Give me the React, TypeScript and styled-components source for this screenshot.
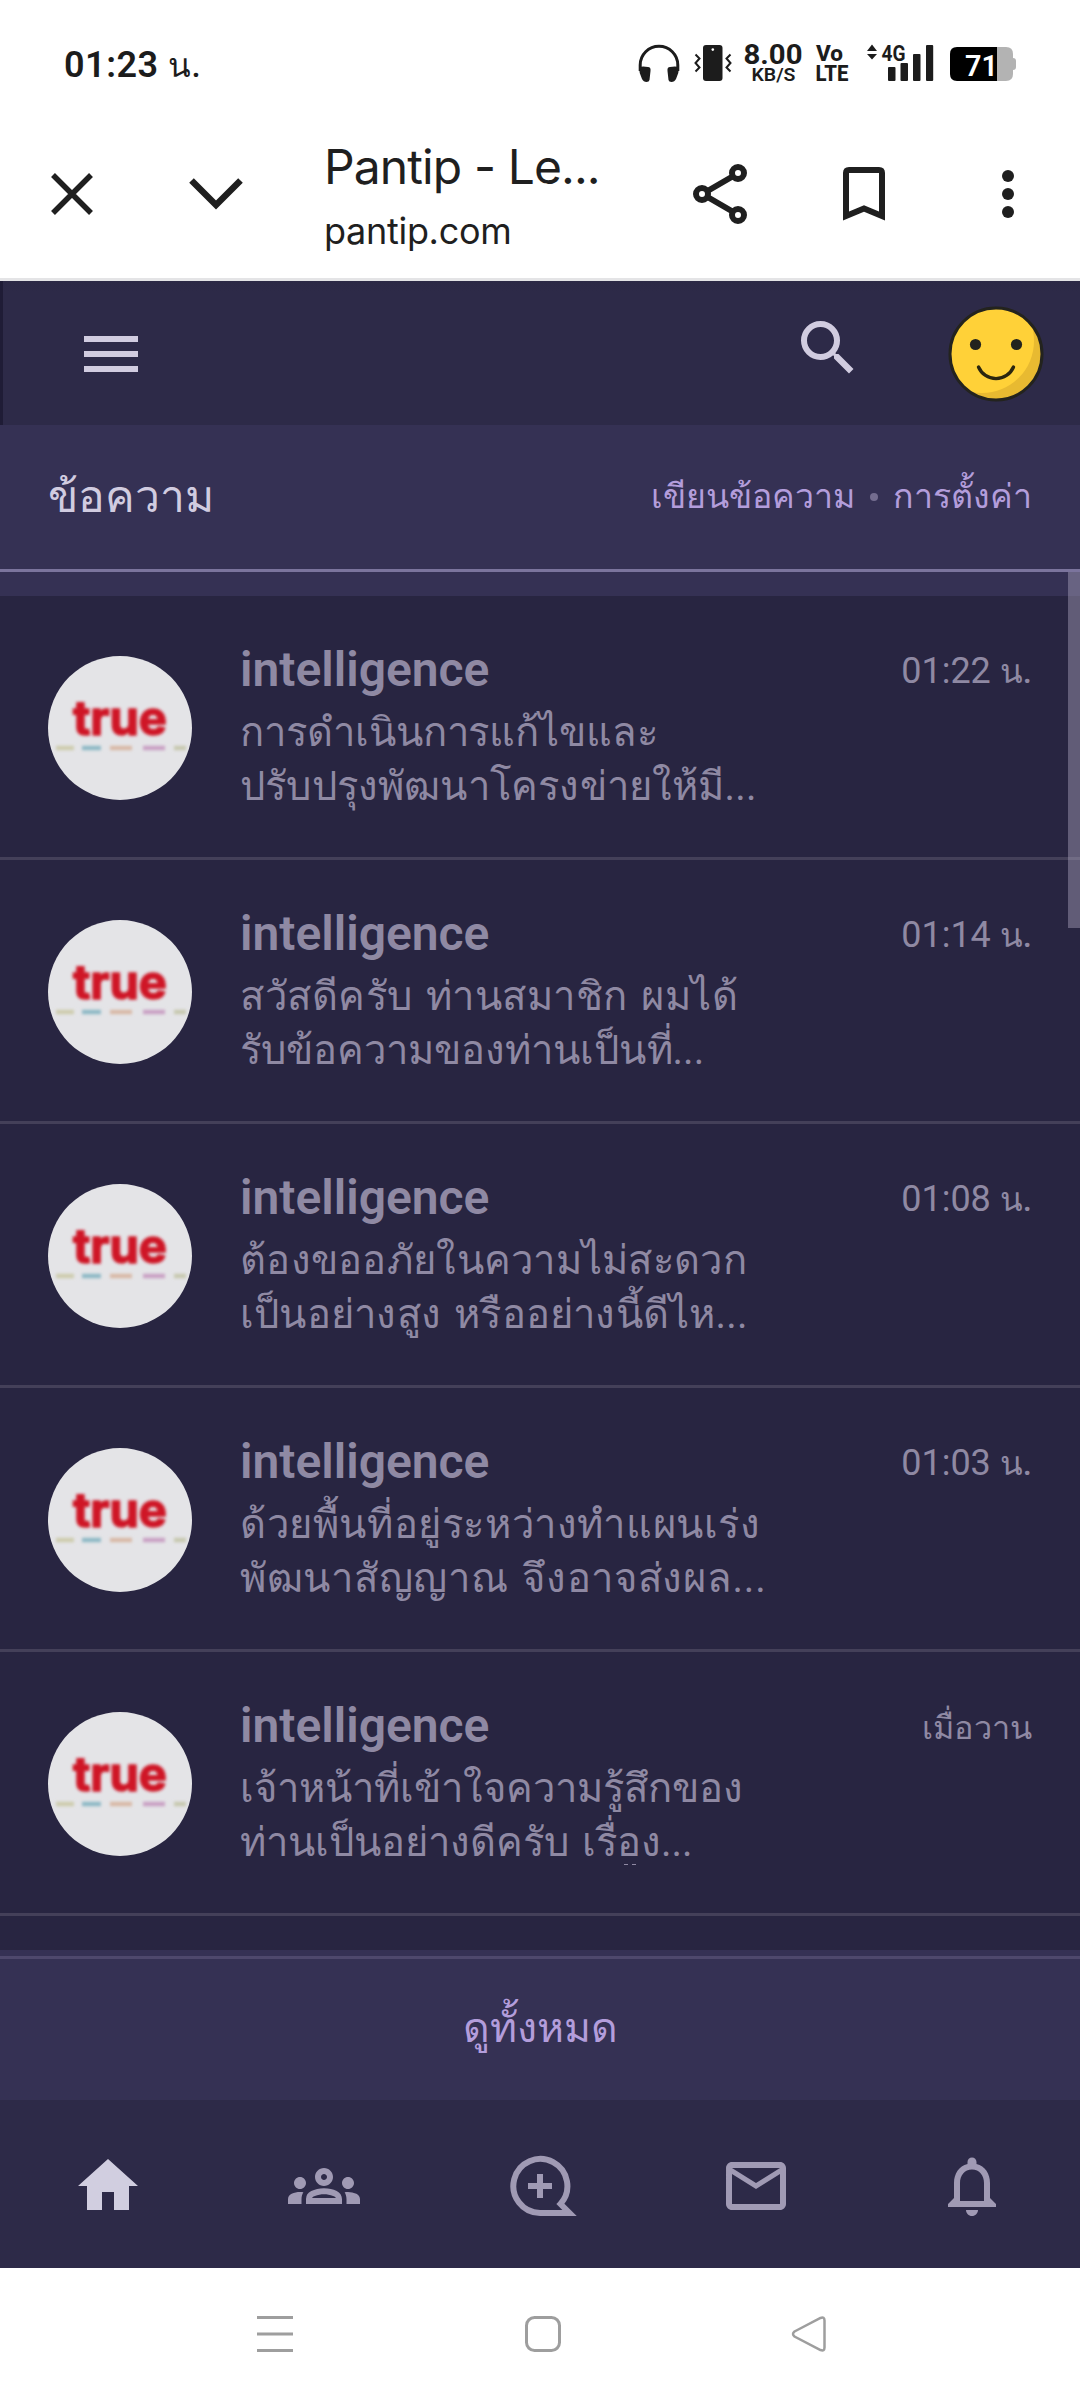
import React from "react";
import styled, { createGlobalStyle } from "styled-components";
import { MdHome, MdOutlineGroups, MdMailOutline, MdNotificationsNone, MdSearch } from "react-icons/md";

const Global = createGlobalStyle`
  * { box-sizing: border-box; }
  body { margin: 0; background: #fff; }
`;

const Screen = styled.div`
  width: 1080px;
  height: 2400px;
  display: flex;
  flex-direction: column;
  overflow: hidden;
  background: #fff;
  font-family: Roboto, sans-serif;
`;

const StatusBar = styled.div`
  height: 110px;
  padding: 18px 63px 0 64px;
  display: flex;
  justify-content: space-between;
  align-items: center;
  color: #1c1c1c;
`;

const Clock = styled.div`
  padding-top: 2px;
  font-size: 36px;
  font-weight: 600;
  line-height: 44px;
  letter-spacing: 0.5px;
  white-space: nowrap;
`;

const ThaiUnit = styled.span`
  font-size: 0.92em;
  font-weight: 500;
`;

const ThaiDay = styled.span`
  font-size: 32.5px;
`;

const StatusIcons = styled.svg`
  width: 380px;
  height: 60px;
  display: block;
`;

const Toolbar = styled.div`
  height: 171px;
  border-bottom: 3px solid #e4e4e6;
  display: grid;
  grid-template-columns: 144px 144px 360px 144px 144px 144px;
  align-items: center;
`;

const ToolIcon = styled.svg`
  width: 72px;
  height: 72px;
  display: block;
  justify-self: center;
`;

const TitleBlock = styled.div`
  padding: 9px 0 0 36px;
  display: flex;
  flex-direction: column;
  color: #1f1f1f;
  font-family: Inter, sans-serif;
  white-space: nowrap;
`;

const PageTitle = styled.div`
  font-size: 48px;
  font-weight: 400;
  line-height: 64px;
  letter-spacing: -0.9px;
`;

const PageHost = styled.div`
  font-size: 36px;
  line-height: 64px;
  letter-spacing: -0.3px;
`;

const SiteHeader = styled.div`
  height: 144px;
  flex: none;
  display: flex;
  align-items: center;
  padding: 2px 36px 0 81px;
  border-left: 3px solid #1f1c36;
  background: linear-gradient(#2c2945, #2d2a48 12px);
  color: #d1cce0;
`;

const MenuButton = styled.div`
  width: 54px;
  display: flex;
  flex-direction: column;
  gap: 9px;
`;

const MenuBar = styled.div`
  height: 6px;
  background: #d1cce0;
`;

const SearchButton = styled.div`
  margin-left: auto;
  margin-right: 84px;
  margin-bottom: 12px;
  font-size: 72px;
  display: flex;
`;

const Smiley = styled.svg`
  width: 96px;
  height: 96px;
  display: block;
`;

const PanelHeader = styled.div`
  height: 147px;
  flex: none;
  display: flex;
  align-items: center;
  justify-content: space-between;
  padding: 0 48px;
  background: #353154;
  border-bottom: 3px solid #7b749d;
  white-space: nowrap;
`;

const PanelTitle = styled.div`
  font-size: 44.4px;
  line-height: 60px;
  color: #d1cce0;
`;

const PanelLinks = styled.div`
  display: flex;
  align-items: center;
  padding-bottom: 1px;
  font-size: 33.9px;
  line-height: 50px;
  color: #b39ddb;
`;

const Dot = styled.span`
  width: 8px;
  height: 8px;
  margin: 0 15px;
  border-radius: 50%;
  background: #746d8f;
`;

const List = styled.div`
  position: relative;
  flex: none;
  height: 1378px;
  padding-top: 24px;
  background: linear-gradient(#353154 24px, #282541 24px);
`;

const ScrollThumb = styled.div`
  position: absolute;
  top: 0;
  right: 0;
  width: 12px;
  height: 356px;
  background: rgba(170, 164, 190, 0.44);
`;

const Row = styled.div`
  height: 264px;
  display: flex;
  padding: 60px 48px 0;
  border-bottom: 3px solid #444059;
  color: #8f89a3;
`;

const Avatar = styled.svg`
  width: 144px;
  height: 144px;
  border-radius: 50%;
  background: #e4e4e7;
  flex: none;
`;

const Body = styled.div`
  flex: 1;
  margin-left: 48px;
  margin-top: -14px;
`;

const TopLine = styled.div`
  display: flex;
  justify-content: space-between;
  height: 64px;
  white-space: nowrap;
`;

const Name = styled.div`
  font-size: 48px;
  font-weight: 600;
  line-height: 56px;
`;

const Time = styled.div`
  font-size: 36px;
  line-height: 58px;
`;

const Preview = styled.div`
  white-space: nowrap;
  word-spacing: 3px;
`;

const Line = styled.div<{ $spacing: number }>`
  height: 54px;
  font-size: 40px;
  line-height: 54px;
  letter-spacing: ${(p) => p.$spacing}px;
`;

/* Tips of the clamped third line's tone marks */
const ClampedMarks = styled.div`
  display: flex;
  gap: 4px;
  margin: -6px 0 0 384px;

  &::before,
  &::after {
    content: "";
    width: 4px;
    height: 1px;
    background: #8f89a3;
  }
`;

const ViewAll = styled.div`
  height: 150px;
  flex: none;
  padding-top: 6px;
  background: #353154;
  color: #b39ddb;
`;

const ViewAllLabel = styled.div`
  height: 144px;
  padding-bottom: 3px;
  border-top: 3px solid #4e486c;
  display: flex;
  align-items: center;
  justify-content: center;
  font-size: 41px;
  line-height: 54px;
`;

const TabBar = styled.div`
  height: 168px;
  flex: none;
  padding-top: 4px;
  display: grid;
  grid-template-columns: repeat(5, 1fr);
  background: #2d2a48;
`;

const Tab = styled.div<{ $active?: boolean }>`
  display: flex;
  align-items: center;
  justify-content: center;
  font-size: 72px;
  color: ${(p) => (p.$active ? "#d1cee0" : "#a09ab4")};
`;

const SystemNav = styled.div`
  height: 132px;
  flex: none;
  display: flex;
  align-items: center;
  justify-content: space-between;
  padding: 0 246px 0 251px;
`;

const NavIcon = styled.svg`
  width: 48px;
  height: 48px;
  fill: none;
  stroke: #9e9e9e;
  stroke-width: 3;
`;

type Message = { time: string; unit?: string; clamped?: boolean; lines: [string, number][] };

const messages: Message[] = [
  { time: "01:22", unit: "น.", lines: [["การดำเนินการแก้ไขและ", -0.06], ["ปรับปรุงพัฒนาโครงข่ายให้มี...", 0.18]] },
  { time: "01:14", unit: "น.", lines: [["สวัสดีครับ ท่านสมาชิก ผมได้", 0.5], ["รับข้อความของท่านเป็นที่...", 0.03]] },
  { time: "01:08", unit: "น.", lines: [["ต้องขออภัยในความไม่สะดวก", 0.28], ["เป็นอย่างสูง หรืออย่างนี้ดีไห...", 0.22]] },
  { time: "01:03", unit: "น.", lines: [["ด้วยพื้นที่อยู่ระหว่างทำแผนเร่ง", 0.6], ["พัฒนาสัญญาณ จึงอาจส่งผล...", 0.72]] },
  { time: "เมื่อวาน", clamped: true, lines: [["เจ้าหน้าที่เข้าใจความรู้สึกของ", 0], ["ท่านเป็นอย่างดีครับ เรื่อง...", 0]] },
];

const StatusGlyphs = () => (
  <StatusIcons viewBox="637 33 380 60" fill="#1c1c1c" fontFamily="Roboto, sans-serif">
    <path d="M640.2 70V64a18.8 18.8 0 0 1 37.6 0v6" fill="none" stroke="#1c1c1c" strokeWidth="3" />
    <path d="M639 66q4-1 9 0q3 0 2.500 4l-1 9q-.4 2-3 2q-3 0-4.500-3q-3-6-3-12zM679 66q-4-1-9 0q-3 0-2.500 4l1 9q.4 2 3 2q3 0 4.500-3q3-6 3-12z" />
    <rect x="703" y="44" width="19.5" height="36" rx="3" />
    <circle cx="712.8" cy="48.6" r="1.3" fill="#fff" />
    <path d="M695.500 53.500l4 4-4 4.500 4 4.500-4 4M730.500 53.500l-4 4 4 4.500-4 4.500 4 4" fill="none" stroke="#1c1c1c" strokeWidth="2" />
    <text x="743.5" y="63" fontSize="27" fontWeight="700" textLength="59" lengthAdjust="spacingAndGlyphs">8.00</text>
    <text x="751.5" y="79.5" fontSize="19" fontWeight="600" textLength="44" lengthAdjust="spacingAndGlyphs">KB/S</text>
    <text x="816" y="60" fontSize="22" fontWeight="800" textLength="27" lengthAdjust="spacingAndGlyphs">Vo</text>
    <text x="815.5" y="79.5" fontSize="22" fontWeight="800" textLength="33" lengthAdjust="spacingAndGlyphs">LTE</text>
    <path d="M867 50l5-6.500 5 6.500zM867 53l5 5.500 5-5.500z" />
    <text x="881.5" y="59.5" fontSize="22" fontWeight="700" textLength="24" lengthAdjust="spacingAndGlyphs">4G</text>
    <rect x="888" y="66" width="7.5" height="14" rx="1" />
    <rect x="900.5" y="62" width="7.5" height="18" rx="1" />
    <rect x="913" y="53" width="7.5" height="27" rx="1" />
    <rect x="926" y="44" width="7.2" height="36" rx="1" />
    <path d="M997 46h9q7 0 7 7v4q3 0 3 3v6q0 3-3 3v4q0 7-7 7h-9z" fill="#b3b3b3" />
    <path d="M997 46v34h-40q-7 0-7-7v-20q0-7 7-7z" fill="#000" />
    <text x="965" y="75" fontSize="30" fontWeight="600" fill="#fff" textLength="33" lengthAdjust="spacingAndGlyphs">71</text>
  </StatusIcons>
);

const TrueAvatar = () => (
  <Avatar viewBox="0 0 144 144">
    <defs>
      <filter id="soft" x="-20%" y="-40%" width="140%" height="180%">
        <feGaussianBlur stdDeviation="1.4" />
      </filter>
    </defs>
    <g filter="url(#soft)">
      <text
        x="25"
        y="79"
        fontFamily="Inter, sans-serif"
        fontWeight="700"
        fontSize="47"
        textLength="94"
        lengthAdjust="spacingAndGlyphs"
        fill="#cf1628"
        stroke="#cf1628"
        strokeWidth="1.6"
        strokeLinejoin="round"
      >
        true
      </text>
      <g strokeWidth="4.5" opacity="0.85">
        <path d="M8 92h18" stroke="#cbc8a4" />
        <path d="M34 92h19" stroke="#7fb2c0" />
        <path d="M62 92h22" stroke="#d6b29c" />
        <path d="M95 92h22" stroke="#c596be" />
        <path d="M126 92h12" stroke="#c2c3a6" />
      </g>
    </g>
  </Avatar>
);

export default function App() {
  return (
    <>
      <Global />
      <Screen>
        <StatusBar>
          <Clock>
            01:23 <ThaiUnit>น.</ThaiUnit>
          </Clock>
          <StatusGlyphs />
        </StatusBar>
        <Toolbar>
          <ToolIcon viewBox="0 0 72 72" stroke="#1f1f1f" strokeWidth="5.5">
            <path d="M17 17l38 38M55 17L17 55" />
          </ToolIcon>
          <ToolIcon viewBox="0 0 72 72" stroke="#1f1f1f" strokeWidth="6.5" fill="none">
            <path d="M11.500 22.500L36 47 60.500 22.500" />
          </ToolIcon>
          <TitleBlock>
            <PageTitle>Pantip - Le...</PageTitle>
            <PageHost>pantip.com</PageHost>
          </TitleBlock>
          <ToolIcon viewBox="0 0 72 72" stroke="#1f1f1f" strokeWidth="6" fill="none">
            <circle cx="18" cy="36" r="6" />
            <circle cx="54" cy="15" r="6" />
            <circle cx="54" cy="57" r="6" />
            <path d="M23.500 33L48.500 18.500M23.500 39L48.500 53.500" />
          </ToolIcon>
          <ToolIcon viewBox="0 0 72 72" stroke="#1f1f1f" strokeWidth="6" fill="none">
            <path d="M18 58V15q0-3 3-3h30q3 0 3 3v43L36 50.500z" />
          </ToolIcon>
          <ToolIcon viewBox="0 0 72 72" fill="#1f1f1f">
            <circle cx="36" cy="18" r="6" />
            <circle cx="36" cy="36" r="6" />
            <circle cx="36" cy="54" r="6" />
          </ToolIcon>
        </Toolbar>
        <SiteHeader>
          <MenuButton>
            <MenuBar />
            <MenuBar />
            <MenuBar />
          </MenuButton>
          <SearchButton>
            <MdSearch />
          </SearchButton>
          <Smiley viewBox="0 0 96 96">
            <defs>
              <clipPath id="face">
                <circle cx="48" cy="48" r="46" />
              </clipPath>
            </defs>
            <g clipPath="url(#face)">
              <rect width="96" height="96" fill="#e8ba31" />
              <circle cx="34" cy="35" r="52" fill="#ffd138" />
            </g>
            <circle cx="48" cy="48" r="46" fill="none" stroke="#23231e" strokeWidth="3" />
            <circle cx="27.5" cy="38.5" r="5.6" fill="#23231e" />
            <circle cx="68.5" cy="38.5" r="5.6" fill="#23231e" />
            <path d="M30.500 61a19 19 0 0 0 35 0" fill="none" stroke="#2b260f" strokeWidth="3.4" strokeLinecap="round" />
          </Smiley>
        </SiteHeader>
        <PanelHeader>
          <PanelTitle>ข้อความ</PanelTitle>
          <PanelLinks>
            <span>เขียนข้อความ</span>
            <Dot />
            <span>การตั้งค่า</span>
          </PanelLinks>
        </PanelHeader>
        <List>
          {messages.map((m) => (
            <Row key={m.time}>
              <TrueAvatar />
              <Body>
                <TopLine>
                  <Name>intelligence</Name>
                  <Time>
                    {m.unit ? (
                      <>
                        {m.time} <ThaiUnit>{m.unit}</ThaiUnit>
                      </>
                    ) : (
                      <ThaiDay>{m.time}</ThaiDay>
                    )}
                  </Time>
                </TopLine>
                <Preview>
                  {m.lines.map(([line, spacing]) => (
                    <Line key={line} $spacing={spacing}>
                      {line}
                    </Line>
                  ))}
                </Preview>
                {m.clamped && <ClampedMarks />}
              </Body>
            </Row>
          ))}
          <ScrollThumb />
        </List>
        <ViewAll>
          <ViewAllLabel>ดูทั้งหมด</ViewAllLabel>
        </ViewAll>
        <TabBar>
          <Tab $active>
            <MdHome />
          </Tab>
          <Tab>
            <MdOutlineGroups />
          </Tab>
          <Tab>
            <svg width="76" height="72" viewBox="-2 0 76 72" fill="none" stroke="currentColor" strokeWidth="6">
              <path d="M36 63A27 27 0 1 1 56.500 54L65.500 63z" />
              <path d="M36 24v24M24 36h24" />
            </svg>
          </Tab>
          <Tab>
            <MdMailOutline />
          </Tab>
          <Tab>
            <MdNotificationsNone />
          </Tab>
        </TabBar>
        <SystemNav>
          <NavIcon viewBox="0 0 48 48">
            <path d="M6 7.500h36M6 24h36M6 40.500h36" />
          </NavIcon>
          <NavIcon viewBox="0 0 48 48">
            <rect x="7.5" y="7.5" width="33" height="33" rx="8" />
          </NavIcon>
          <NavIcon viewBox="0 0 48 48">
            <path d="M8.500 21.500L34.500 8q4-1.500 4 2.500v27q0 4-4 2.500L8.500 26.500q-3-2.500 0-5z" strokeWidth="2.5" />
          </NavIcon>
        </SystemNav>
      </Screen>
    </>
  );
}
